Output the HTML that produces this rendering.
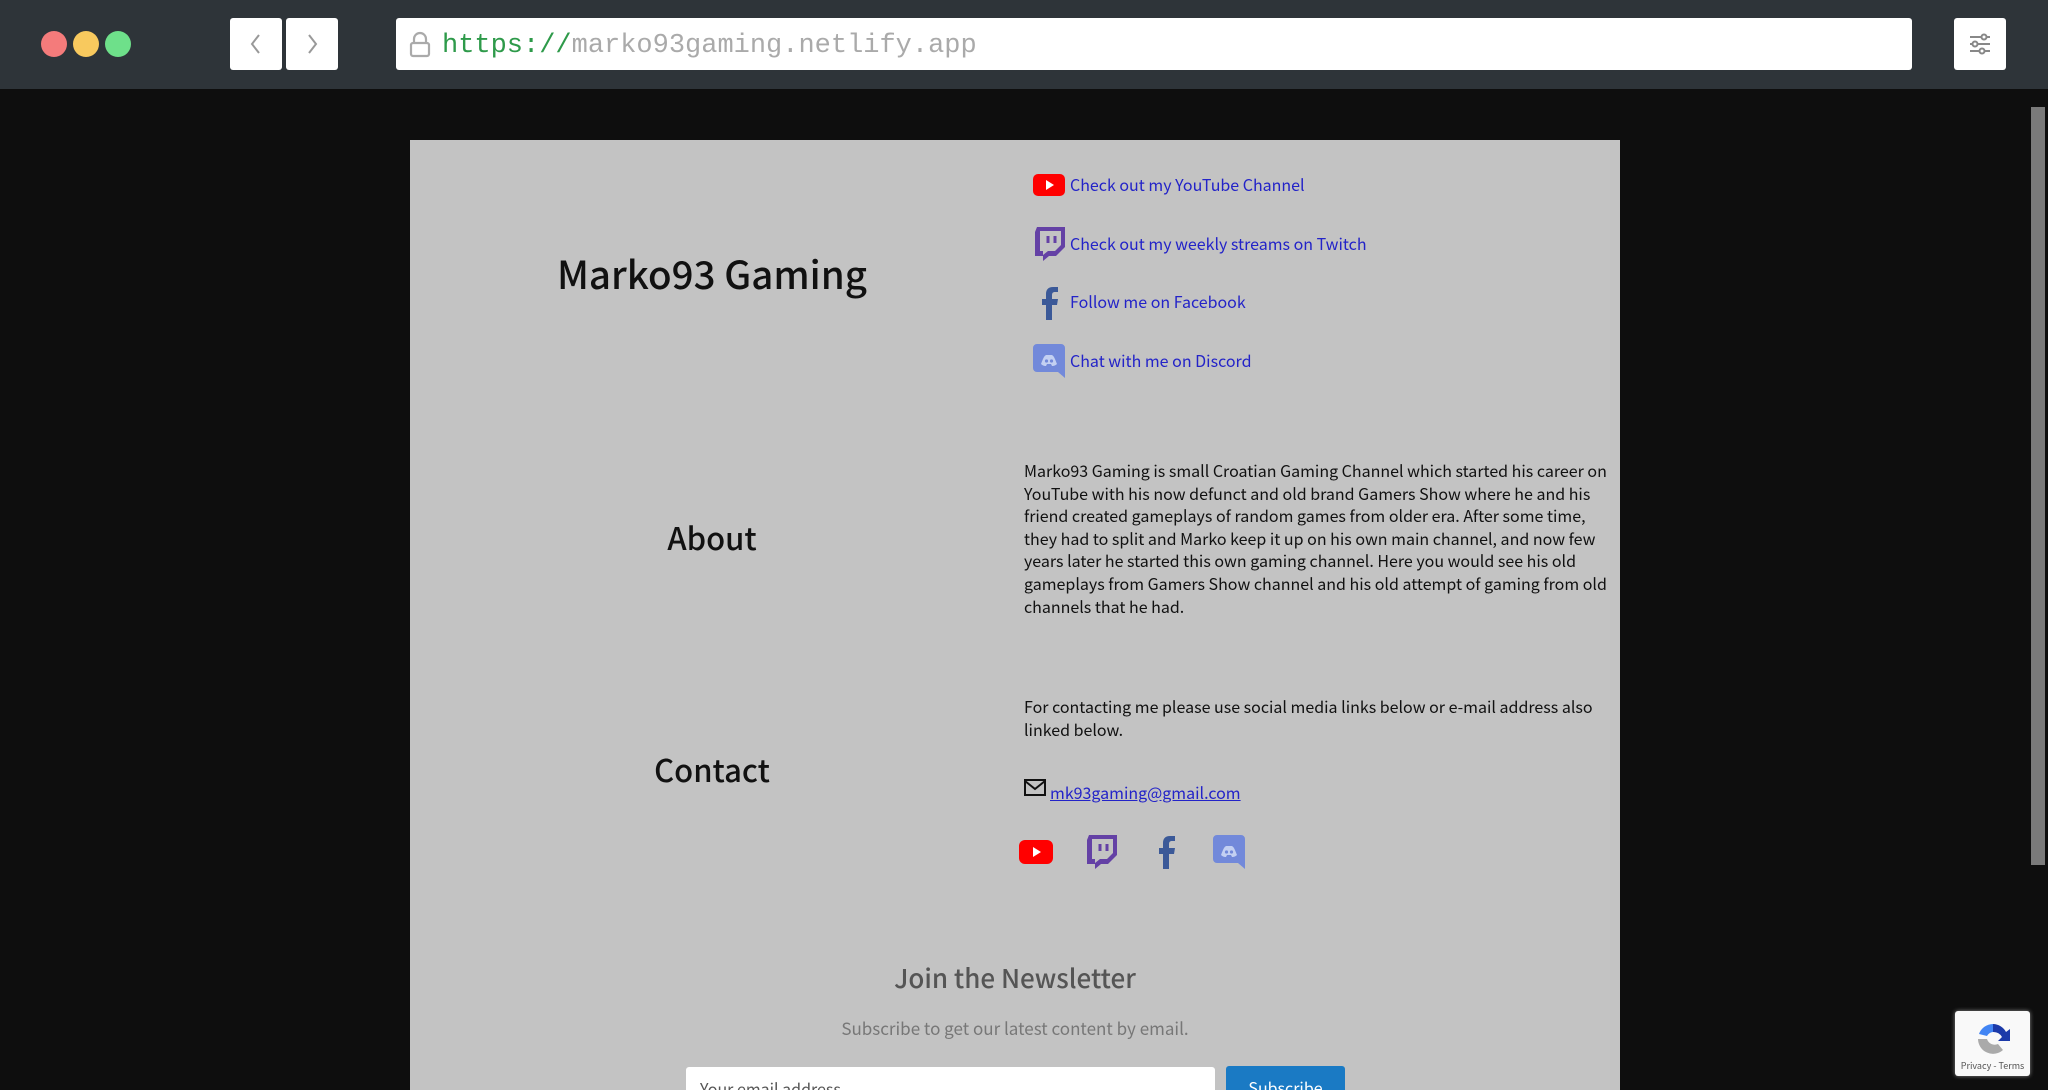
<!DOCTYPE html>
<html style="overflow:hidden;height:1090px"><head><meta charset="utf-8"><style>
*{margin:0;padding:0;box-sizing:border-box}
body{width:2048px;height:1090px;overflow:hidden;background:#0e0e0e;font-family:"Noto Sans CJK SC","Liberation Sans",sans-serif;position:relative}
.top{position:absolute;left:0;top:0;width:2048px;height:89px;background:#2e3439}
.dot{position:absolute;top:31px;width:26px;height:26px;border-radius:50%}
.btn{position:absolute;top:18px;height:52px;background:#fff;border-radius:3px}
.url{position:absolute;left:396px;top:18px;width:1516px;height:52px;background:#fff;border-radius:3px;font-family:"Liberation Mono",monospace;font-size:27px;line-height:56px;padding-left:46px;color:#aaa}
.panel{position:absolute;left:410px;top:140px;width:1210px;height:950px;background:#c3c3c3}
.a{position:absolute;color:#2323c8;font-size:16px;white-space:nowrap}
.ic{position:absolute}
h1,h2{position:absolute;font-weight:500;color:#111;text-align:center;width:600px;left:412px}
p{position:absolute;font-size:16px;line-height:22.6px;color:#111}
</style></head><body>
<div class="top">
<div class="dot" style="left:41px;background:#f47b7b"></div>
<div class="dot" style="left:73px;background:#f8c95e"></div>
<div class="dot" style="left:105px;background:#6ee08a"></div>
<div class="btn" style="left:230px;width:52px"><svg width="52" height="52"><path d="M29 17l-7 9 7 9" stroke="#999" stroke-width="2" fill="none"/></svg></div>
<div class="btn" style="left:286px;width:52px"><svg width="52" height="52"><path d="M23 17l7 9-7 9" stroke="#999" stroke-width="2" fill="none"/></svg></div>
<div class="url"><svg style="position:absolute;left:12px;top:13px" width="24" height="27"><path d="M6 12V8a6 6 0 0112 0v4" stroke="#aaa" stroke-width="2.2" fill="none"/><rect x="3" y="12" width="18" height="13" rx="2" stroke="#aaa" stroke-width="2.2" fill="none"/></svg><span style="color:#2e9a4a">https://</span>marko93gaming.netlify.app</div>
<div class="btn" style="left:1954px;width:52px"><svg width="52" height="52"><g stroke="#888" stroke-width="2"><path d="M16 19h20M16 26h20M16 33h20"/></g><g fill="#fff" stroke="#888" stroke-width="2"><circle cx="30" cy="19" r="2.5"/><circle cx="21" cy="26" r="2.5"/><circle cx="28" cy="33" r="2.5"/></g></svg></div>
</div>
<div style="position:absolute;left:2031px;top:107px;width:14px;height:758px;background:#7a7a7a"></div>
<div class="panel"></div>
<h1 style="top:245px;font-size:38.5px">Marko93 Gaming</h1>
<svg class="ic" style="left:1033px;top:174px" width="32" height="22"><rect width="32" height="22" rx="5" fill="#f00"/><path d="M13 6l8 5-8 5z" fill="#fff"/></svg>
<div class="a" style="left:1070px;top:172px">Check out my YouTube Channel</div>
<svg class="ic" style="left:1033px;top:227px" width="32" height="34"><path d="M4 0h28v20l-9 9h-7l-6 5v-5H2V5z" fill="#6441a5"/><path d="M7 4h21v14l-6 6h-7l-5 4v-4H7z" fill="#c3c3c3"/><path d="M15 9v7M22 9v7" stroke="#6441a5" stroke-width="3"/></svg>
<div class="a" style="left:1070px;top:231px">Check out my weekly streams on Twitch</div>
<svg class="ic" style="left:1036px;top:286px" width="24" height="34"><path d="M16 34V19h5l1-6h-6V9c0-2 1-3 3-3h3V1h-5c-5 0-7 3-7 7v5H6v6h4v15z" fill="#3b5998"/></svg>
<div class="a" style="left:1070px;top:289px">Follow me on Facebook</div>
<svg class="ic" style="left:1033px;top:344px" width="32" height="34"><path d="M4 0h24a4 4 0 014 4v30l-7-6H4a4 4 0 01-4-4V4a4 4 0 014-4z" fill="#7289da"/><path d="M8 20c3-8 4-9 6-9h4c2 0 3 1 6 9-2 2-4 2-5 2l-1-2h-4l-1 2c-1 0-3 0-5-2z" fill="#c3d0f2"/><circle cx="13.5" cy="17" r="1.6" fill="#7289da"/><circle cx="18.5" cy="17" r="1.6" fill="#7289da"/></svg>
<div class="a" style="left:1070px;top:348px">Chat with me on Discord</div>
<h2 style="top:514px;font-size:31px">About</h2>
<p style="left:1024px;top:459px;width:592px">Marko93 Gaming is small Croatian Gaming Channel which started his career on YouTube with his now defunct and old brand Gamers Show where he and his friend created gameplays of random games from older era. After some time, they had to split and Marko keep it up on his own main channel, and now few years later he started this own gaming channel. Here you would see his old gameplays from Gamers Show channel and his old attempt of gaming from old channels that he had.</p>
<h2 style="top:746px;font-size:31px">Contact</h2>
<p style="left:1024px;top:695px;width:592px">For contacting me please use social media links below or e-mail address also linked below.</p>
<svg class="ic" style="left:1024px;top:779px" width="22" height="18"><rect x="1" y="1" width="20" height="15" fill="none" stroke="#111" stroke-width="2"/><path d="M1 2l10 8 10-8" fill="none" stroke="#111" stroke-width="2"/></svg>
<div class="a" style="left:1050px;top:780px;text-decoration:underline">mk93gaming@gmail.com</div>
<svg class="ic" style="left:1019px;top:840px" width="34" height="24"><rect width="34" height="24" rx="6" fill="#f00"/><path d="M14 7l8 5-8 5z" fill="#fff"/></svg>
<svg class="ic" style="left:1085px;top:835px" width="32" height="34"><path d="M4 0h28v20l-9 9h-7l-6 5v-5H2V5z" fill="#6441a5"/><path d="M7 4h21v14l-6 6h-7l-5 4v-4H7z" fill="#c3c3c3"/><path d="M15 9v7M22 9v7" stroke="#6441a5" stroke-width="3"/></svg>
<svg class="ic" style="left:1153px;top:835px" width="24" height="34"><path d="M16 34V19h5l1-6h-6V9c0-2 1-3 3-3h3V1h-5c-5 0-7 3-7 7v5H6v6h4v15z" fill="#3b5998"/></svg>
<svg class="ic" style="left:1213px;top:835px" width="32" height="34"><path d="M4 0h24a4 4 0 014 4v30l-7-6H4a4 4 0 01-4-4V4a4 4 0 014-4z" fill="#7289da"/><path d="M8 20c3-8 4-9 6-9h4c2 0 3 1 6 9-2 2-4 2-5 2l-1-2h-4l-1 2c-1 0-3 0-5-2z" fill="#c3d0f2"/><circle cx="13.5" cy="17" r="1.6" fill="#7289da"/><circle cx="18.5" cy="17" r="1.6" fill="#7289da"/></svg>
<div style="position:absolute;left:715px;width:600px;top:959px;text-align:center;font-size:26px;color:#555;font-weight:500">Join the Newsletter</div>
<div style="position:absolute;left:715px;width:600px;top:1015px;text-align:center;font-size:17px;color:#777">Subscribe to get our latest content by email.</div>
<div style="position:absolute;left:686px;top:1067px;width:529px;height:23px;background:#fff;border-radius:3px 3px 0 0;font-size:16px;color:#555;padding:13px 0 0 14px;overflow:hidden;line-height:16px">Your email address</div>
<div style="position:absolute;left:1226px;top:1066px;width:119px;height:24px;background:#1a7ac4;border-radius:3px 3px 0 0;color:#fff;font-size:16px;text-align:center;padding-top:13px;overflow:hidden;line-height:16px">Subscribe</div>
<div style="position:absolute;left:1955px;top:1011px;width:75px;height:65px;background:#f9f9f9;border-radius:3px;box-shadow:0 0 4px #888">
<svg style="position:absolute;left:20px;top:10px" width="36" height="36"><path d="M18 3a15 15 0 0113 8l4-3v12H23l4-4a10 10 0 00-9-5z" fill="#1c3aa9"/><path d="M18 3a15 15 0 00-14 10l8 2a8 8 0 016-4z" fill="#4285f4"/><path d="M3 18a15 15 0 0025 11l-5-6a8 8 0 01-11-5z" fill="#aaa"/></svg>
<div style="position:absolute;bottom:4px;width:100%;text-align:center;font-size:9px;color:#555">Privacy - Terms</div></div>
</body></html>
